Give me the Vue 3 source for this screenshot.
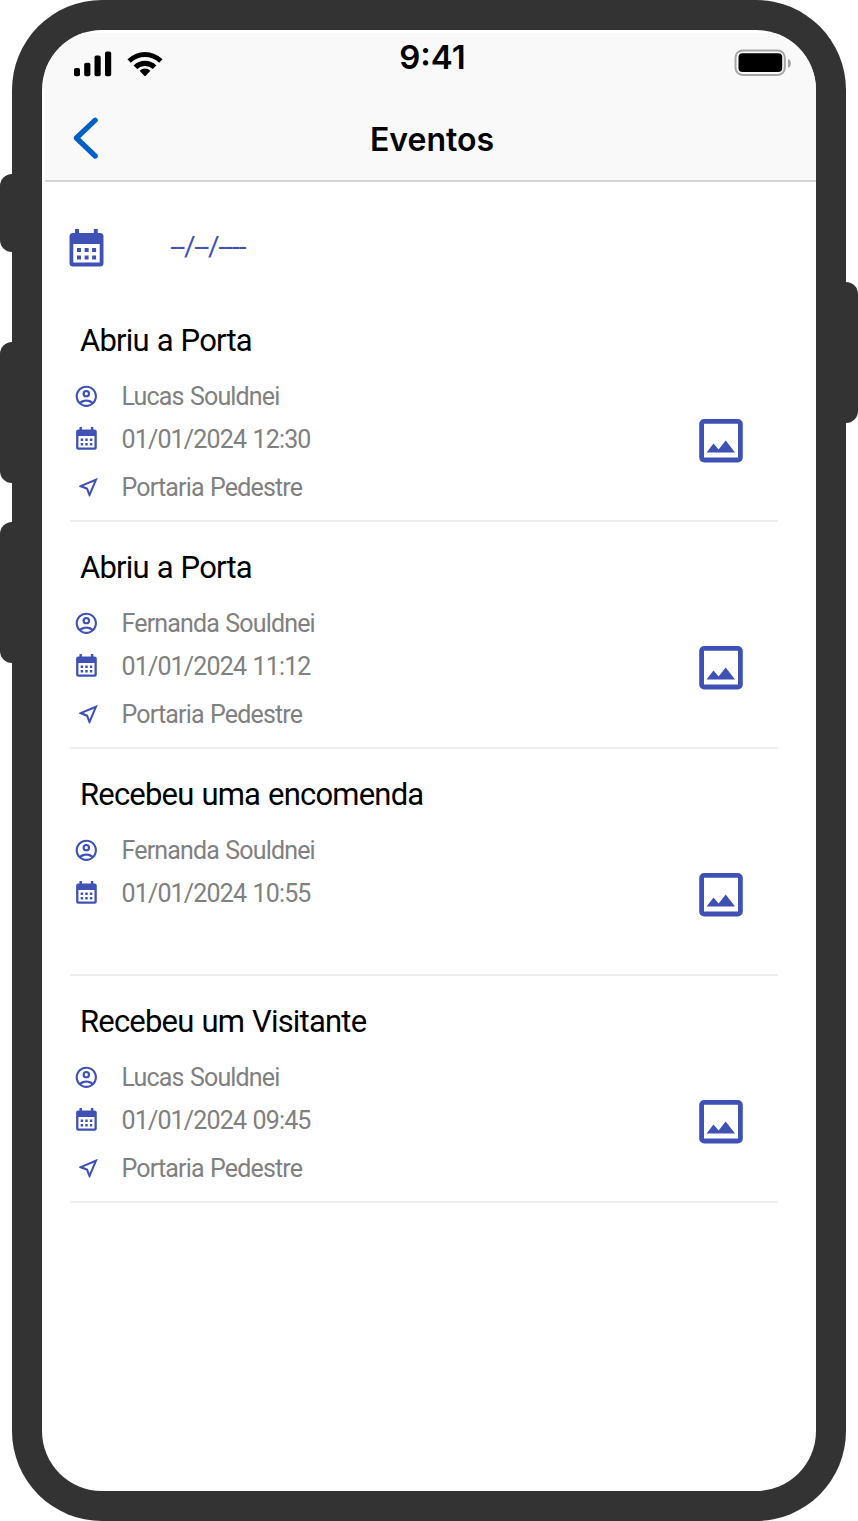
<script setup>
const events = [
  { title: 'Abriu a Porta', person: 'Lucas Souldnei', date: '01/01/2024 12:30', place: 'Portaria Pedestre' },
  { title: 'Abriu a Porta', person: 'Fernanda Souldnei', date: '01/01/2024 11:12', place: 'Portaria Pedestre' },
  { title: 'Recebeu uma encomenda', person: 'Fernanda Souldnei', date: '01/01/2024 10:55', place: '' },
  { title: 'Recebeu um Visitante', person: 'Lucas Souldnei', date: '01/01/2024 09:45', place: 'Portaria Pedestre' },
]
</script>

<template>
  <div class="device">
    <i class="key key-mute"></i>
    <i class="key key-up"></i>
    <i class="key key-down"></i>
    <i class="key key-power"></i>

    <div class="screen">
      <header class="header">
        <div class="status">
          <svg class="signal" width="92" height="28" viewBox="0 0 92 28">
            <rect x="1" y="18" width="6" height="8.3" rx="1.8" />
            <rect x="11.2" y="12.8" width="6.2" height="13.5" rx="1.8" />
            <rect x="21.5" y="5.6" width="6.2" height="20.7" rx="1.8" />
            <rect x="32" y="1.6" width="6.2" height="24.7" rx="1.8" />
            <g transform="translate(72 0)">
              <path d="M-17.6 9.2A25.2 25.2 0 0 1 17.6 9.2L14.2 12.8A20.4 20.4 0 0 0 -14.2 12.8Z" />
              <path d="M-11.4 15.4A16.4 16.4 0 0 1 11.4 15.4L7.8 19A11.6 11.6 0 0 0 -7.8 19Z" />
              <path d="M-5.4 20.7A8 8 0 0 1 5.4 20.7L0.5 25.9Q0 26.3 -.5 25.9Z" />
            </g>
          </svg>
          <span class="time">9:41</span>
          <svg class="battery" width="58" height="28" viewBox="0 0 58 28">
            <rect x="1.5" y="1.4" width="49.3" height="24.6" rx="7.2" fill="none" stroke="#a6a6a6" stroke-width="2" />
            <rect x="4.5" y="4.2" width="43.7" height="18.8" rx="4" />
            <path d="M54 10c4 1 4 7.8 0 8.8z" fill="#a6a6a6" />
          </svg>
        </div>
        <div class="nav">
          <svg class="back" width="28" height="44" viewBox="0 0 28 44">
            <path d="M22.2 4.2 3.4 22l18.800 18" fill="none" stroke="#0060c7" stroke-width="5.2" stroke-linecap="round" stroke-linejoin="round" />
          </svg>
          <h1>Eventos</h1>
        </div>
      </header>

      <main class="content">
        <div class="filter">
          <svg class="calendar" width="35" height="38" viewBox="0 0 35 38">
            <path fill-rule="evenodd" d="M6 0h4v4h14.8V0h4v4H31a3.500 3.500 0 0 1 3.500 3.500V34a3.500 3.500 0 0 1-3.500 3.500H4A3.500 3.500 0 0 1 .5 34V7.500A3.500 3.500 0 0 1 4 4h2zM4.300 15v18.600h26.400V15zM8 19h4v4H8zm7.600 0h4v4h-4zm7.500 0h4v4h-4zM8 26.500h4v4H8zm7.600 0h4v4h-4zm7.500 0h4v4h-4z" />
          </svg>
          <span class="placeholder">--/--/----</span>
        </div>

        <article v-for="(event, index) in events" :key="index" class="event">
          <div class="info">
            <h2>{{ event.title }}</h2>
            <p class="row">
              <svg class="user" width="26" height="26" viewBox="-0.49 0.45 24.41 24.41">
                <path fill-rule="evenodd" d="M12 2a10 10 0 1 0 0 20 10 10 0 0 0 0-20zM7.350 18.500C8.660 17.560 10.260 17 12 17s3.340.56 4.650 1.500C15.340 19.440 13.740 20 12 20s-3.340-.56-4.650-1.500zm10.790-1.380C16.450 15.800 14.320 15 12 15s-4.450.8-6.140 2.120A8 8 0 1 1 20 12c0 1.950-.7 3.730-1.860 5.120zM12 6a3.500 3.500 0 1 0 0 7 3.500 3.500 0 0 0 0-7zm0 5a1.500 1.500 0 1 1 0-3 1.500 1.500 0 0 1 0 3z" />
              </svg>
              <span>{{ event.person }}</span>
            </p>
            <p class="row">
              <svg class="date" width="22" height="24" viewBox="0.3 0 36.2 39.5">
                <path fill-rule="evenodd" d="M6 0h4v4h14.800V0h4v4H31a3.500 3.500 0 0 1 3.500 3.500V34a3.500 3.500 0 0 1-3.500 3.500H4A3.500 3.500 0 0 1 .5 34V7.500A3.500 3.500 0 0 1 4 4h2zM4.300 15v18.600h26.400V15zM8 19h4v4H8zm7.600 0h4v4h-4zm7.500 0h4v4h-4zM8 26.500h4v4H8zm7.600 0h4v4h-4zm7.500 0h4v4h-4z" />
              </svg>
              <span>{{ event.date }}</span>
            </p>
            <p v-if="event.place" class="row place">
              <svg class="arrow" width="25" height="25" viewBox="0 0.3 24 24">
                <path d="M17.270 6.730l-4.240 10.130-1.320-3.420-.32-.83-.82-.32-3.430-1.330 10.130-4.230M21 3L3 10.530v.98l6.840 2.650L12.480 21h.98L21 3z" />
              </svg>
              <span>{{ event.place }}</span>
            </p>
          </div>
          <svg class="photo" width="44" height="44" viewBox="0 0 44 44">
            <rect x="2.600" y="2.400" width="38.800" height="38.600" rx="2.600" fill="none" stroke="#3f51b5" stroke-width="4.800" />
            <path d="M7.600 33.600l6.900-9 5.100 6 7.100-9.200 9.300 12.200z" />
          </svg>
        </article>
      </main>
    </div>
  </div>
</template>

<style>
body {
  background: #fff;
}
</style>

<style scoped>
.device {
  position: relative;
  box-sizing: border-box;
  width: 834px;
  height: 1521px;
  margin-left: 12px;
  padding: 30px;
  border-radius: 90px;
  background: #333;
}
.key {
  position: absolute;
  width: 24px;
  height: 141px;
  border-radius: 12px;
  background: #333;
}
.key-mute { left: -12px; top: 174px; height: 78px; }
.key-up { left: -12px; top: 342px; }
.key-down { left: -12px; top: 522px; }
.key-power { right: -12px; top: 282px; }

.screen {
  position: relative;
  box-sizing: border-box;
  width: 774px;
  height: 1461px;
  padding: 3px 0 0 3px;
  border-radius: 60px;
  background: #fff;
  overflow: hidden;
}
.header {
  box-sizing: border-box;
  height: 149px;
  border-bottom: 2px solid #d4d4d4;
  background: #f9f9f9;
}
.status {
  display: grid;
  grid-template-columns: 1fr auto 1fr;
  height: 62px;
  padding: 0 24px 0 28px;
}
.signal { margin-top: 17px; }
.battery { margin-top: 16px; justify-self: end; }
.time {
  font: 600 33px/48px Inter, sans-serif;
  color: #000;
}
.nav {
  display: grid;
  grid-template-columns: 1fr auto 1fr;
  padding: 0 25px 0 28px;
}
.back { margin-top: 21px; }
h1 {
  margin: 22px 0 0;
  font: 600 32px/46px Inter, sans-serif;
  color: #000;
}

.content {
  padding: 0 38px 0 24px;
}
.filter {
  display: flex;
  align-items: center;
  box-sizing: border-box;
  height: 113px;
  padding-top: 19px;
}
.calendar, .user, .date, .arrow, .photo {
  flex: none;
  fill: #3f51b5;
}
.placeholder {
  margin: -2px 0 0 66.5px;
  font: 400 28px/30px Roboto, sans-serif;
  letter-spacing: -1px;
  color: #3f51b5;
}
.event {
  display: flex;
  justify-content: space-between;
  box-sizing: border-box;
  height: 227px;
  padding: 28px 35px 0 10px;
  margin-left: 1px;
  border-bottom: 2px solid #eee;
}
h2 {
  margin: 0 0 16px;
  font: 400 31px/36px Roboto, sans-serif;
  letter-spacing: -0.8px;
  word-spacing: 1px;
  color: #000;
}
.row {
  display: flex;
  align-items: center;
  height: 43px;
  margin: 0 0 0 -7px;
  font: 400 25px/30px Roboto, sans-serif;
  letter-spacing: -0.84px;
  word-spacing: 1px;
  color: #808080;
}
.place { margin-top: 5px; }
.user { margin: 1px 22.5px 0 0; }
.date { margin: -1px 23.5px 0 3px; }
.arrow { margin: -1px 20.5px 0 3px; }
.photo { margin-top: 96px; }
</style>
